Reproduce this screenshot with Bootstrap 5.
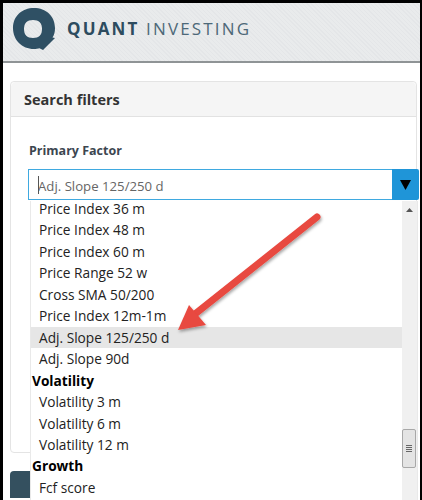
<!DOCTYPE html>
<html lang="en">
<head>
<meta charset="utf-8">
<title>Quant Investing</title>
<link href="https://cdn.jsdelivr.net/npm/bootstrap@5.3.0/dist/css/bootstrap.min.css" rel="stylesheet">
<style>
html,body{height:500px;overflow:hidden;background:#000}
body{font-family:"Open Sans","Noto Sans",sans-serif}
.shot-frame{position:relative;height:497px;margin:3px 2px 0 3px;background:#fff;overflow:hidden}
.top-bar{height:60px;background:repeating-linear-gradient(45deg,#e4e6e8 0 1px,#e9ebec 1px 3px);border-bottom:2px solid #8f9496;padding:0 0 4px 10px;gap:8px}
.brand-text{font-family:"Open Sans",sans-serif;font-size:17px;letter-spacing:2.15px;color:#4d6878;margin-top:-2px}
.brand-text b{color:#2d4c5f;font-weight:700}
.page-main{padding:18px 0 0 7px}
.filter-card{width:407px;height:372px;border-color:#e4e4e4;border-radius:4px}
.filter-card .card-header{height:35px;padding:5px 13px;background:#f5f5f5;border-color:#e2e2e2;font-size:14.5px;font-weight:700;color:#333;line-height:25px}
.filter-card .card-body{padding:25px 0 0 18px;position:relative}
.factor-label{font-size:12.5px;font-weight:700;color:#3c4650;line-height:18px;margin:0 0 9px}
.factor-group{width:390px}
.factor-group .form-control{height:31px;padding:4px 9px 2px;border:1px solid #3fa9e0;border-radius:0;font-size:13.2px;color:#666;box-shadow:none;background:#fff}
.factor-cursor{position:absolute;left:9px;top:7px;width:1px;height:18px;background:#555;z-index:6}
.factor-btn{width:27px;height:31px;padding:0;border-radius:0 2px 2px 0;background:#1f95d8;border:0;color:#000;font-size:0}
.factor-list{position:absolute;left:19px;top:84px;width:388px;height:300px;background:#fff;border:1px solid #e9e9e9;border-top:0;z-index:5;overflow:hidden}
.factor-rows{width:372px;margin:-3px 0 0;padding:0;list-style:none;font-size:13.7px;line-height:21.45px;color:#222}
.factor-rows li{padding-left:8px;white-space:nowrap}
.factor-rows li.grp{padding-left:1px;font-weight:700;color:#000}
.factor-rows li.sel{background:#e6e6e6}
.fake-scroll{position:absolute;top:0;right:0;bottom:0;width:15px;background:#f0f0f0}
.fake-thumb{position:absolute;left:0;top:228px;width:14px;height:39px;background:#e4e4e4;border:1px solid #a8a8a8;border-radius:2px;display:flex;flex-direction:column;align-items:center;justify-content:center;gap:1px}
.fake-thumb i{display:block;width:6px;height:1px;background:#666}
.fake-up{position:absolute;left:4px;top:7px}
.dark-block{width:407px;height:27px;margin-top:18px;background:#34505f;border-radius:4px 4px 0 0}
.arrow-layer{position:absolute;left:0;top:0;z-index:9;pointer-events:none}
</style>
</head>
<body>
<div class="shot-frame">
  <header class="top-bar d-flex align-items-center">
    <svg width="46" height="46" viewBox="0 0 46 46" aria-hidden="true">
      <path fill="#2f5064" fill-rule="evenodd" d="M21 1C33 1 42 9 42 21c0 4-.7 7-2.500 9.500L42 31 30 43l-3.500-1.700C25 41.800 23 42 21 42 9 42 0 33 0 21S9 1 21 1ZM20 13c-6 0-9 3-9 9s3 9 9 9 9-3 9-9-3-9-9-9Z"/>
    </svg>
    <div class="brand-text"><b>QUANT</b> INVESTING</div>
  </header>
  <main class="page-main">
    <section class="card filter-card">
      <div class="card-header">Search filters</div>
      <div class="card-body">
        <p class="factor-label">Primary Factor</p>
        <div class="input-group factor-group position-relative">
          <span class="factor-cursor"></span>
          <input class="form-control" type="text" value="Adj. Slope 125/250 d" aria-label="Primary Factor">
          <button class="btn factor-btn d-flex align-items-center justify-content-center" type="button" aria-label="Open">
            <svg width="11" height="10" viewBox="0 0 11 10"><path d="M0 0h11L5.500 10Z" fill="#000"/></svg>
          </button>
        </div>
        <div class="factor-list">
          <ul class="factor-rows">
            <li>Price Index 36 m</li>
            <li>Price Index 48 m</li>
            <li>Price Index 60 m</li>
            <li>Price Range 52 w</li>
            <li>Cross SMA 50/200</li>
            <li>Price Index 12m-1m</li>
            <li class="sel">Adj. Slope 125/250 d</li>
            <li>Adj. Slope 90d</li>
            <li class="grp">Volatility</li>
            <li>Volatility 3 m</li>
            <li>Volatility 6 m</li>
            <li>Volatility 12 m</li>
            <li class="grp">Growth</li>
            <li>Fcf score</li>
          </ul>
          <div class="fake-scroll">
            <svg class="fake-up" width="7" height="4" viewBox="0 0 7 4"><path d="M0 4 3.500 0 7 4Z" fill="#555"/></svg>
            <div class="fake-thumb"><i></i><i></i><i></i><i></i></div>
          </div>
        </div>
      </div>
    </section>
    <div class="dark-block"></div>
  </main>
  <svg class="arrow-layer" width="417" height="497" viewBox="3 3 417 497" aria-hidden="true">
    <defs><filter id="soft" x="-20%" y="-20%" width="140%" height="140%"><feDropShadow dx="1" dy="2" stdDeviation="1.800" flood-color="#000" flood-opacity=".35"/></filter></defs>
    <g filter="url(#soft)">
      <path d="M317 217 195 314" stroke="#e8483f" stroke-width="7" stroke-linecap="round" fill="none"/>
      <path d="M178 330 189 305 206 325Z" fill="#e8483f"/>
    </g>
  </svg>
</div>
<script src="https://cdn.jsdelivr.net/npm/bootstrap@5.3.0/dist/js/bootstrap.bundle.min.js"></script>
</body>
</html>
